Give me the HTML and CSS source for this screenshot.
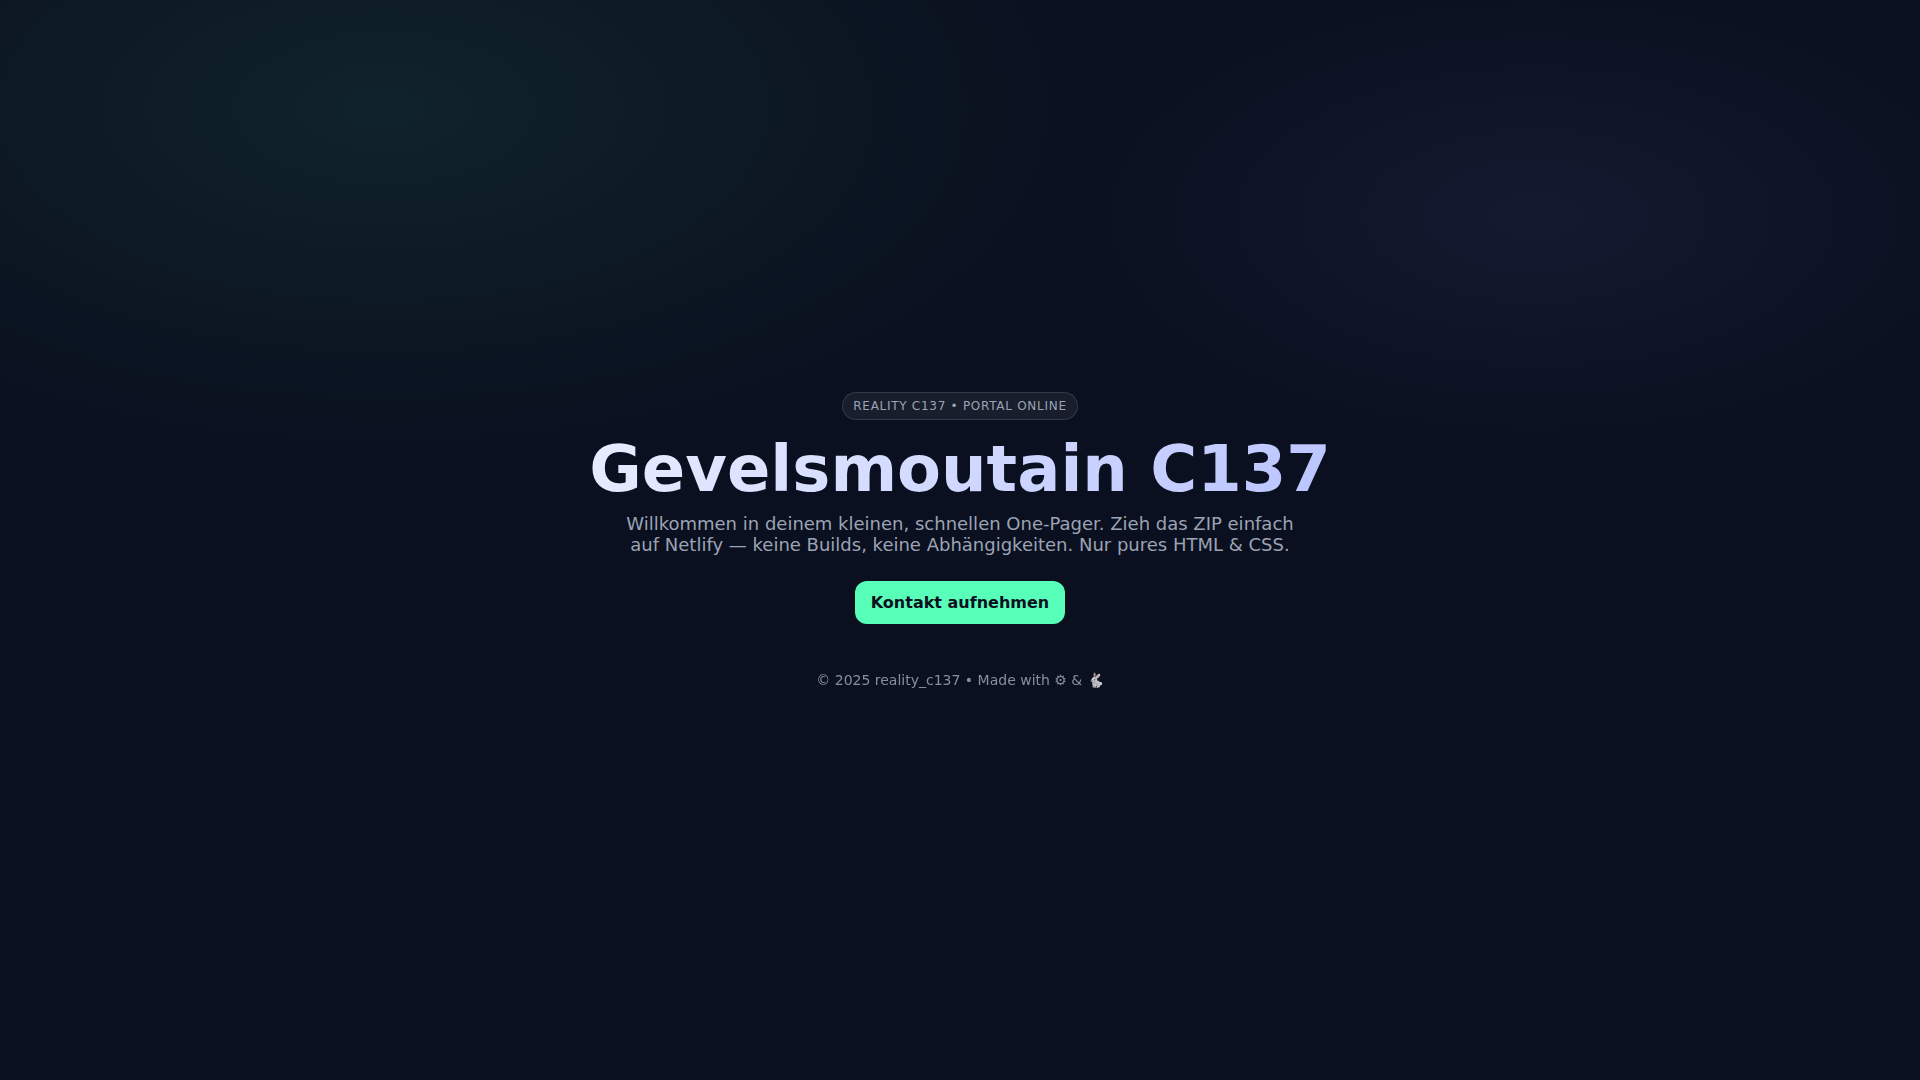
FILE: index.html
```
<!DOCTYPE html>
<html lang="de">
<head>
    <meta charset="UTF-8">
    <meta name="viewport" content="width=device-width, initial-scale=1.0">
    <title>Gevelsmoutain C137</title>
    <link rel="stylesheet" href="styles.css">
</head>
<body>

<main class="hero">
    <span class="badge">Reality C137 • Portal Online</span>
    <h1>Gevelsmoutain C137</h1>
    <p class="lead">Willkommen in deinem kleinen, schnellen One-Pager. Zieh das ZIP einfach auf Netlify — keine Builds, keine Abhängigkeiten. Nur pures HTML &amp; CSS.</p>
    <a class="button" href="mailto:hello@example.com">Kontakt aufnehmen</a>
    <footer>© 2025 reality_c137 • Made with ⚙ &amp; 🐇</footer>
</main>

</body>
</html>
```
FILE: styles.css
```
* {
    box-sizing: border-box;
}

body {
    margin: 0;
    min-height: 100vh;
    display: grid;
    place-items: center;
    font-family: "DejaVu Sans", sans-serif;
    color: #e8edff;
    background:
        radial-gradient(1200px 600px at 20% 10%, rgba(88, 255, 184, 0.08), transparent 60%),
        radial-gradient(800px 400px at 80% 20%, rgba(130, 150, 255, 0.08), transparent 60%),
        #0a101f;
}

.hero {
    max-width: 800px;
    padding: 24px;
    display: flex;
    flex-direction: column;
    align-items: center;
    text-align: center;
}

.badge {
    padding: 6px 10px;
    border: 1px solid rgba(255, 255, 255, 0.12);
    border-radius: 999px;
    background: rgba(255, 255, 255, 0.06);
    color: #9ca3b4;
    font-size: 12px;
    letter-spacing: 0.06em;
    text-transform: uppercase;
}

h1 {
    margin: 16px 0 10px;
    font-size: 64px;
    line-height: 67px;
    background: linear-gradient(135deg, #e8edff, #b9c4ff);
    -webkit-background-clip: text;
    background-clip: text;
    color: transparent;
}

.lead {
    max-width: 700px;
    margin: 0 0 26px;
    color: #9ca3b4;
    font-size: 18px;
}

.button {
    padding: 12px 16px;
    border-radius: 12px;
    background: #58ffb8;
    color: #0a101f;
    font-size: 16px;
    font-weight: bold;
    text-decoration: none;
}

footer {
    margin-top: 48px;
    color: #9ca3b4;
    font-size: 14px;
    opacity: 0.85;
}
```
